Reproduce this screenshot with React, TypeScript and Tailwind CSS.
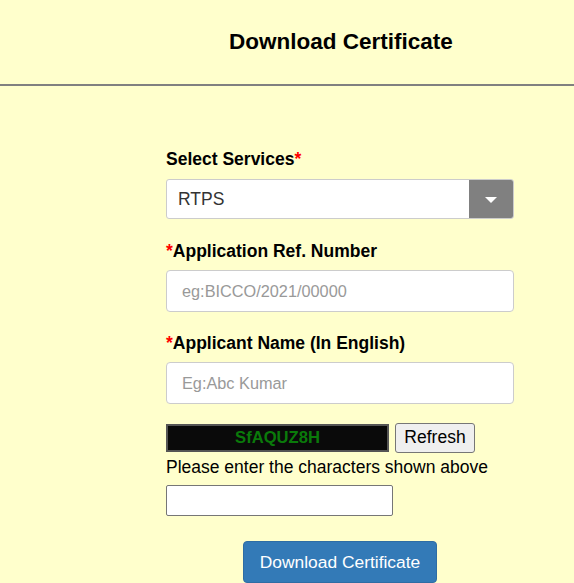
import React from "react";

export default function App() {
  return (
    <div className="w-[574px] h-[583px] bg-[#ffffcc] overflow-hidden" style={{ fontFamily: '"Liberation Sans", Arial, sans-serif' }}>
      <div className="h-[84px] flex items-center pl-[229px]">
        <h1 className="text-[22.5px] font-bold text-black leading-none">Download Certificate</h1>
      </div>
      <div className="h-[2px] bg-[#808080]" />
      <div className="ml-[166px] w-[348px] pt-[64px]">
        <label className="block text-[17.5px] font-bold text-black leading-[18px]">
          Select Services<span className="text-[#ff0000]">*</span>
        </label>
        <div className="mt-[11px] h-[40px] flex border border-[#cccccc] rounded-[3px] bg-white overflow-hidden">
          <div className="flex-1 flex items-center pl-[11px] text-[17.5px] text-[#333]">RTPS</div>
          <div className="w-[44px] bg-[#808080] flex items-center justify-center pt-[2px]">
            <svg width="12" height="7" viewBox="0 0 12 7"><path d="M0 0 L12 0 L6 6 Z" fill="#ffffff" /></svg>
          </div>
        </div>
        <label className="block mt-[23px] text-[17.5px] font-bold text-black leading-[18px]">
          <span className="text-[#ff0000]">*</span>Application Ref. Number
        </label>
        <div className="mt-[10px] h-[42px] flex items-center border border-[#cccccc] rounded-[4px] bg-white pl-[15px] text-[16.3px] text-[#999999]">
          eg:BICCO/2021/00000
        </div>
        <label className="block mt-[22px] text-[17.5px] font-bold text-black leading-[18px]">
          <span className="text-[#ff0000]">*</span>Applicant Name (In English)
        </label>
        <div className="mt-[10px] h-[42px] flex items-center border border-[#cccccc] rounded-[4px] bg-white pl-[15px] text-[16.3px] text-[#999999]">
          Eg:Abc Kumar
        </div>
        <div className="mt-[19px] flex items-center gap-[6px]">
          <div className="w-[223px] h-[28px] bg-[#0a0a0a] border-2 border-[#555555] flex items-center justify-center text-[16.6px] font-bold text-[#0a7a0a]">
            SfAQUZ8H
          </div>
          <button className="w-[80px] h-[30px] bg-[#efefef] border border-[#767676] rounded-[3px] text-[17.5px] text-black leading-none">Refresh</button>
        </div>
        <div className="mt-[4px] text-[17.5px] text-black leading-[20px]">Please enter the characters shown above</div>
        <div className="mt-[8px] w-[227px] h-[31px] bg-white border border-[#767676] rounded-[2px]" />
        <div className="mt-[25px] pl-[77px]">
          <button className="w-[194px] h-[42px] bg-[#337ab7] border border-[#2e6da4] rounded-[4px] text-white text-[17.4px]">Download Certificate</button>
        </div>
      </div>
    </div>
  );
}
